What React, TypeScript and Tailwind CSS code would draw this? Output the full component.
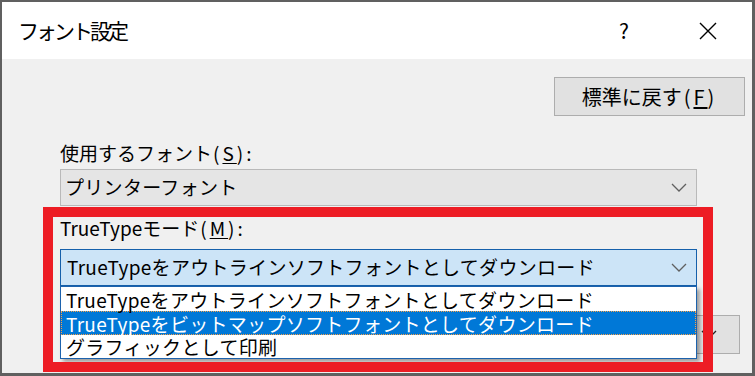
import React from 'react';

const jp = '[font-family:"Noto_Sans_CJK_JP","Noto_Sans",sans-serif]';

const Chevron = ({ className = '' }: { className?: string }) => (
  <svg width="16" height="9" viewBox="0 0 16 9" className={className}>
    <path d="M1 1 L8 8 L15 1" fill="none" stroke="currentColor" strokeWidth="1.3" />
  </svg>
);

const items = [
  'TrueTypeをアウトラインソフトフォントとしてダウンロード',
  'TrueTypeをビットマップソフトフォントとしてダウンロード',
  'グラフィックとして印刷',
];

export default function App() {
  return (
    <div
      className={`w-[755px] h-[376px] border-t-2 border-l-2 border-r-[3px] border-b-[3px] border-[#606060] flex flex-col text-black ${jp}`}
    >
      {/* title bar */}
      <div className="h-[57px] bg-white flex items-center pl-[16px] shrink-0">
        <span className="text-[21px] tracking-[-3px] leading-none">フォント設定</span>
        <span className="ml-auto text-[21px] leading-none mr-[69px]">?</span>
        <svg width="20" height="20" viewBox="0 0 20 20" className="mr-[34px]">
          <path d="M2 2 L18 18 M18 2 L2 18" stroke="#000" strokeWidth="1.4" />
        </svg>
      </div>

      {/* body */}
      <div className="relative flex-1 bg-[#f0f0f0] pt-[18px]">
        <div className="flex justify-end pr-[7px]">
          <div className="w-[191px] h-[39px] bg-[#e1e1e1] border border-[#adadad] flex items-center justify-center text-[20px] leading-none">
            標準に戻す
            <span className="tracking-[3px] ml-[2px]">
              (<span className="underline underline-offset-2">F</span>)
            </span>
          </div>
        </div>

        <div className="pl-[58px]">
          <div className="mt-[25px] h-[24px] text-[19px] leading-[24px]">
            使用するフォント
            <span className="tracking-[3px] ml-[1px]">
              (<span className="underline underline-offset-2">S</span>):
            </span>
          </div>
          <div className="mt-[4px] w-[637px] h-[37px] bg-[#e5e5e5] border border-[#b9b9b9] flex items-center pl-[4px] pr-[9px] text-[19px] tracking-[0.3px]">
            <span>プリンターフォント</span>
            <Chevron className="ml-auto text-[#606060]" />
          </div>

          <div className="mt-[10px] h-[24px] text-[19px] leading-[24px]">
            TrueTypeモード
            <span className="tracking-[3px] ml-[1px]">
              (<span className="underline underline-offset-2">M</span>):
            </span>
          </div>
          <div className="mt-[9px] w-[637px] h-[37px] bg-[#cce4f7] border border-[#1560ab] flex items-center pl-[6px] pr-[9px] text-[19px] tracking-[0.3px]">
            <span>{items[0]}</span>
            <Chevron className="ml-auto text-[#606060]" />
          </div>

          <div className="mt-[29px] flex">
            <div className="ml-[500px] w-[180px] h-[39px] bg-[#e1e1e1] border border-[#adadad] flex items-center justify-end pr-[22px]">
              <Chevron className="text-[#222]" />
            </div>
          </div>
        </div>

        {/* dropdown list */}
        <div className="absolute left-[58px] top-[227px] w-[637px] bg-white border border-[#1c62ad] shadow-[3px_3px_4px_rgba(0,0,0,0.35)] text-[19px] tracking-[0.3px] leading-none">
          <div className="h-[24px] flex items-center pl-[5px]">{items[0]}</div>
          <div className="h-[24px] flex items-center pl-[4px] bg-[#0078d7] text-white border border-dotted border-[#f7a24a]">
            {items[1]}
          </div>
          <div className="h-[23px] flex items-center pl-[5px]">{items[2]}</div>
        </div>

        {/* red highlight frame */}
        <div className="absolute left-[41px] top-[148px] w-[670px] h-[165px] border-[10px] border-[#ed1c24] pointer-events-none" />
      </div>
    </div>
  );
}
